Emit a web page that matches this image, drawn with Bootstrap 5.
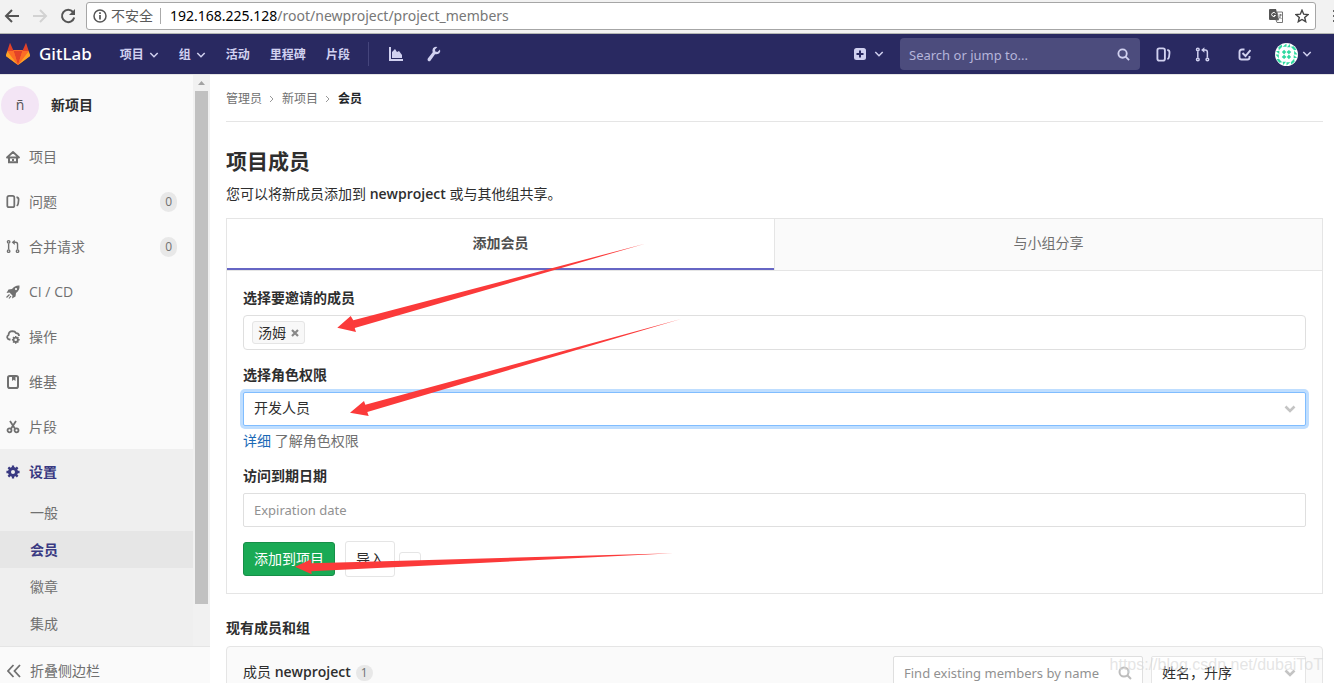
<!DOCTYPE html>
<html lang="zh-CN">
<head>
<meta charset="utf-8">
<meta name="viewport" content="width=device-width, initial-scale=1">
<title>会员 · 新项目 · GitLab</title>
<link href="https://cdn.jsdelivr.net/npm/bootstrap@5.3.0/dist/css/bootstrap.min.css" rel="stylesheet">
<style>
  body { font: 14px/20px "Open Sans", "Noto Sans CJK SC", sans-serif; color: #2e2e2e; background: #fff; }
  a { color: inherit; text-decoration: none; }
  svg { flex: none; }
  b, .fw-bold { font-weight: 600 !important; }

  /* browser bar */
  .chrome-bar { height: 34px; background: #f2f2f2; border-bottom: 1px solid #b4b6b3; color: #5a5a5a; padding: 0 0 2px 4px; }
  .chrome-bar button { border: 0; background: none; padding: 0; display: flex; color: inherit; }
  .address { height: 28px; background: #fff; border: 1px solid #a6a6a6; border-radius: 3px; padding: 0 6px; margin: 0 16px 0 10px; }
  .address .url { font-family: "Noto Sans", sans-serif; color: #777; margin-left: 9px; }
  .address .sep { width: 1px; height: 16px; background: #aaa; margin-left: 7px; }

  /* top navigation */
  .topnav { height: 40px; background: #292961; color: #d1d1f0; padding: 0 22px 0 6px; font-size: 12px; }
  .topnav .brand-word { font: 500 17px/24px "Noto Sans", sans-serif; color: #fff; margin-left: 9px; }
  .menu-links { gap: 20px; padding-top: 2px; }
  .menu-links a { display: flex; align-items: center; gap: 5px; }
  .topnav .sep { width: 1px; height: 24px; background: #45457c; margin-left: 18px; }
  .quick { width: 240px; height: 32px; background: #4c4c7d; border-radius: 4px; padding: 0 10px 0 9px; }
  .quick input { background: none; border: 0; outline: 0; color: #d1d1f0; min-width: 0; padding: 2px 0 0; font: 13px/20px "Noto Sans", sans-serif; }
  .quick input::placeholder { color: #b5b5da; }

  /* sidebar */
  .side { width: 210px; background: #fafafa; color: #707070; }
  .side-list { border-top: 1px solid #e5e5e5; }
  .side-top { height: 59px; padding-left: 1px; color: #2e2e2e; }
  .letter { width: 38px; height: 38px; background: #f3e5f5; color: #555; border-radius: 50%; }
  .side-item { height: 45px; padding: 0 16px 0 6px; gap: 9px; }
  .side-sub { height: 37px; padding-left: 30px; }
  .side-open { background: #efefef; flex: 1; }
  .side-open .current { color: #393982; font-weight: 600; }
  .side-sub.current { background: #e6e6e6; }
  .tally { background: #e8e8e8; color: #707070; border-radius: 10px; font-size: 12px; line-height: 20px; padding: 0 5px; }
  .track { width: 17px; background: #f1f1f1; padding: 0 2px; }
  .track .thumb { width: 13px; height: 513px; background: #c1c1c1; }
  .collapse-btn { height: 37px; border: 0; border-top: 1px solid #e5e5e5; background: #fafafa; color: #707070; padding: 14px 0 0 7px; gap: 9px; text-align: left; flex: none; }
  .collapse-btn svg { margin-top: 3px; }

  /* page */
  .page { border-top: 1px solid #e5e5e5; padding: 0 11px 0 16px; min-width: 0; }
  .crumbs { height: 47px; padding-top: 2px; border-bottom: 1px solid #e5e5e5; font-size: 12px; color: #707070; gap: 7px; }
  h1 { font-size: 21px; line-height: 28px; font-weight: 600; margin: 25px 0 9px; }
  .intro { margin: 0 0 14px; }
  .panel-box { border: 1px solid #e5e5e5; }
  .tabs { border-bottom: 1px solid #e5e5e5; }
  .tabs .tab { flex: 1; height: 51px; border: 0; background: #fafafa; color: #707070; padding: 0 0 4px; }
  .tabs .tab.on { background: #fff; color: #4f4f4f; font-weight: 600; border-bottom: 2px solid #6666c4; padding: 0 0 2px; }
  .tabs .tab + .tab { border-left: 1px solid #e5e5e5; }
  .invite { padding: 17px 16px 16px; }
  .invite label { font-weight: 600; display: block; margin-bottom: 7px; }
  .field { height: 34px; border: 1px solid #dfdfdf; border-radius: 2px; padding: 6px 10px; font-size: 14px; line-height: 20px; color: #2e2e2e; }
  input.field, .find input { font: 13px/20px "Noto Sans", sans-serif; }
  .field::placeholder { color: #919191; }
  .tokens { height: 35px; border-radius: 4px; padding: 0 8px; margin-bottom: 15px; }
  .tokens input { border: 0; outline: 0; min-width: 0; }
  .token { height: 23px; background: #f8f8f8; border: 1px solid #e5e5e5; border-radius: 3px; padding: 0 5px; gap: 5px; flex: none; }
  .token button { border: 0; background: none; padding: 0; display: flex; color: #888; }
  .pick { appearance: none; padding: 5px 10px 7px; background-color: #fff; background-repeat: no-repeat; background-position: right 9px center; background-size: 12px 8px;
    background-image: url("data:image/svg+xml,%3Csvg xmlns='http://www.w3.org/2000/svg' viewBox='0 0 12 8'%3E%3Cpath d='M1.5 1.5 6 6l4.500-4.500' fill='none' stroke='%23c4c4c4' stroke-width='2.600'/%3E%3C/svg%3E"); }
  .pick.focused { border-color: #80bdff; box-shadow: 0 0 0 3px #bfdeff; }
  .hint { color: #707070; margin: 5px 0 15px; }
  .hint a { color: #1b69b6; }
  .actions { height: 36px; margin-top: 14px; }
  .actions .btn { font-size: 14px; line-height: 20px; border-radius: 3px; padding: 6px 0; height: 34px; }
  .btn-add { background: #1aaa55; border-color: #168f48; color: #fff; width: 92px; }
  .actions .btn-import { border-color: #e5e5e5; color: #2e2e2e; background: #fff; height: 36px; width: 50px; padding: 7px 0; margin-left: 10px; }
  .actions .btn-blank { border-color: #e5e5e5; width: 22px; height: 14px; padding: 0; }
  .arrows { left: 0; top: 0; pointer-events: none; }
  h2 { font-size: 14px; line-height: 20px; font-weight: 600; margin: 24px 0 8px; }
  .members { background: #fafafa; border-radius: 4px 4px 0 0; height: 60px; padding: 9px 16px 0; }
  .members-title { padding-top: 6px; }
  .members .tally { line-height: 16px; padding: 0 5px; margin-left: 5px; }
  .find { width: 250px; background: #fff; }
  .find input { border: 0; outline: 0; min-width: 0; padding: 0; }
  .find input::placeholder { color: #919191; }
  .find svg { color: #bdbdbd; }
  .sort { width: 155px; border-color: #e5e5e5; font-family: "Noto Sans CJK TC", sans-serif; }
  .credit { right: 11px; bottom: 8px; font: 16px/20px "Liberation Sans", sans-serif; color: #d8d8d8aa; white-space: nowrap; }
</style>
</head>
<body class="vh-100 d-flex flex-column overflow-hidden position-relative">

<svg class="d-none">
  <defs>
    <symbol id="chev" viewBox="0 0 10 10"><path d="M1.300 3 5 6.700 8.700 3" fill="none" stroke="currentColor" stroke-width="1.500"/></symbol>
    <symbol id="issues" viewBox="0 0 16 16"><g fill="none" stroke="currentColor" stroke-width="2"><rect x="1.500" y="1.500" width="8" height="13" rx="2"/><path d="M12 3c2.500.4 2.700 1.500 2.400 3.500l-.5 4c-.2 1.500-.7 2-1.700 2.500" stroke-width="1.900"/></g></symbol>
    <symbol id="merge" viewBox="0 0 16 16"><g fill="none" stroke="currentColor" stroke-width="1.600"><path d="M3 4.500v7M8.500 3.200h2.300q2.400 0 2.400 2.300v6"/><circle cx="3" cy="2.700" r="1.400"/><circle cx="3" cy="13.300" r="1.400"/><circle cx="13.200" cy="13.300" r="1.400"/></g><path d="M10 .2v6L6.500 3.200z" fill="currentColor"/></symbol>
    <symbol id="find" viewBox="0 0 14 14"><g fill="none" stroke="currentColor" stroke-width="2"><circle cx="6" cy="6" r="4.500"/><path d="m9.300 9.300 3.700 3.700"/></g></symbol>
    <symbol id="gear" viewBox="0 0 16 16"><circle cx="8" cy="8" r="4" fill="none" stroke="currentColor" stroke-width="3.400"/><path d="M8 .5v3M8 12.500v3M.5 8h3M12.500 8h3M2.700 2.700l2 2M11.300 11.300l2 2M2.700 13.300l2-2M11.300 4.700l2-2" stroke="currentColor" stroke-width="2.600"/></symbol>
  </defs>
</svg>

<header class="chrome-bar d-flex align-items-center flex-shrink-0">
  <button type="button" aria-label="后退"><svg width="16" height="16" viewBox="0 0 16 16" fill="none" stroke="#555" stroke-width="2"><path d="M15 8H2M8 2 2 8l6 6"/></svg></button>
  <button type="button" class="ms-2 ps-1" aria-label="前进"><svg width="16" height="16" viewBox="0 0 16 16" fill="none" stroke="#d2d2d2" stroke-width="2"><path d="M1 8h13M8 2l6 6-6 6"/></svg></button>
  <button type="button" class="ms-2 ps-1" aria-label="刷新"><svg width="16" height="16" viewBox="0 0 16 16"><path d="M13 4A6.200 6.200 0 1 0 14.200 9.500" fill="none" stroke="#555" stroke-width="2"/><path d="M15 1v6H9z" fill="#555"/></svg></button>
  <div class="address d-flex align-items-center flex-grow-1">
    <svg width="14" height="14" viewBox="0 0 14 14"><circle cx="7" cy="7" r="6" fill="none" stroke="#555" stroke-width="1.500"/><path d="M7 6v4.500M7 3.300v1.600" stroke="#555" stroke-width="1.700"/></svg>
    <span class="ms-1">不安全</span><span class="sep"></span>
    <span class="url"><span class="text-black">192.168.225.128</span>/root/newproject/project_members</span>
    <button type="button" class="ms-auto" aria-label="翻译"><svg width="14" height="14" viewBox="0 0 14 14"><path d="M1 0h6l3 11H1q-1 0-1-1V1q0-1 1-1z" fill="#555"/><path d="M6.500 4.500A2 2 0 1 0 6.500 6.500H5" fill="none" stroke="#fff"/><path d="M8 3h5.500v10.500H8L7 11h2.500z" fill="#fff" stroke="#666" stroke-width=".9"/><path d="M9.500 6h3.500M11.500 5v1q-.5 3-2 4M10 7.500l2.500 2.500" stroke="#666" fill="none" stroke-width=".8"/></svg></button>
    <button type="button" class="ms-2 ps-1" aria-label="收藏"><svg width="14" height="14" viewBox="0 0 14 14"><path d="m7 1.200 1.700 4 4.300.4-3.300 2.900 1 4.200L7 10.500l-3.700 2.200 1-4.200L1 5.600l4.300-.4z" fill="none" stroke="#444" stroke-width="1.400"/></svg></button>
  </div>
  <button type="button" aria-label="菜单"><svg width="2" height="14" viewBox="0 0 2 14"><path d="M1 1h1v2H1zM1 6h1v2H1zM1 11h1v2H1z" fill="#666"/></svg></button>
</header>

<nav class="topnav d-flex align-items-center flex-shrink-0">
  <a href="#" class="d-flex align-items-center"><svg width="24" height="24" viewBox="0 0 24 24"><path d="M12 23 0 14 2 8h20l2 6z" fill="#fc6d26"/><path d="M12 23 7.600 9h8.800z" fill="#e24329"/><path d="M4 .8 1.300 9h6.300zM20 .8 22.700 9h-6.300z" fill="#e24329"/><path d="m1.300 9-1.300 4q-.2.800.5 1.400L12 23zM22.700 9l1.300 4q.2.800-.5 1.400L12 23z" fill="#fca326"/><path d="M1.300 9h6.300L12 23zM22.700 9h-6.300L12 23z" fill="#fc6d26"/></svg><span class="brand-word">GitLab</span></a>
  <div class="menu-links d-flex align-items-center fw-bold ms-4 ps-1">
    <a href="#">项目 <svg width="10" height="10"><use href="#chev"/></svg></a>
    <a href="#">组 <svg width="10" height="10"><use href="#chev"/></svg></a>
    <a href="#">活动</a>
    <a href="#">里程碑</a>
    <a href="#">片段</a>
  </div>
  <span class="sep"></span>
  <a href="#" class="ms-3 ps-1 d-flex" aria-label="统计"><svg width="14" height="14" viewBox="0 0 14 14" fill="currentColor"><path d="M0 0h2v12h12v2H0zM3 11V5l3-3 2 3 2-1 3 4v3z"/></svg></a>
  <a href="#" class="ms-4 d-flex" aria-label="管理"><svg width="14" height="16" viewBox="0 0 14 16"><path d="M13 3.500 10.500 6 8.300 5.600 8 3.500l2.400-2.600Q7.500 0 6 2.200 5 4 5.700 6.200L.8 12.500q-.8 1.500.4 2.500 1.300.9 2.400-.5L8 8.200q2.500.5 4.300-1Q13.800 5.500 13 3.500z" fill="currentColor"/></svg></a>
  <a href="#" class="ms-auto d-flex align-items-center gap-2" aria-label="新建"><svg width="12" height="12" viewBox="0 0 12 12"><rect width="12" height="12" rx="2.500" fill="currentColor"/><path d="M6 2.500v7M2.500 6h7" stroke="#292961" stroke-width="2"/></svg><svg width="10" height="10"><use href="#chev"/></svg></a>
  <div class="quick d-flex align-items-center ms-3"><input type="text" class="flex-grow-1" placeholder="Search or jump to..." aria-label="搜索"><svg width="13" height="13"><use href="#find"/></svg></div>
  <a href="#" class="ms-3 d-flex" aria-label="问题"><svg width="15" height="15"><use href="#issues"/></svg></a>
  <a href="#" class="ms-4 d-flex" aria-label="合并请求"><svg width="15" height="15"><use href="#merge"/></svg></a>
  <a href="#" class="ms-4 ps-1 d-flex" aria-label="待办"><svg width="13" height="13" viewBox="0 0 13 13" fill="none" stroke="currentColor" stroke-width="1.900"><path d="M6.500 1.500H4Q1.500 1.500 1.500 4v5.500q0 2 2 2h6q2 0 2-2V8M4.500 5l3 3L12.500 2"/></svg></a>
  <a href="#" class="ms-4 d-flex align-items-center gap-1" aria-label="用户"><svg width="23" height="23" viewBox="0 0 24 24"><circle cx="12" cy="12" r="12" fill="#fff"/><g fill="#2fd9a0"><path id="q" d="M3.500 4.500 7 1.500l.5 2.500L4 7.500zM8 4l4-3.500V4zM9.500 7l2.200 2.500L9.500 12 7.200 9.500zM1 8.500l3.500-.5v3.500z"/><use href="#q" transform="rotate(90 12 12)"/><use href="#q" transform="rotate(180 12 12)"/><use href="#q" transform="rotate(270 12 12)"/></g></svg><svg width="10" height="10"><use href="#chev"/></svg></a>
</nav>

<div class="d-flex flex-grow-1 overflow-hidden">
  <aside class="side d-flex flex-column flex-shrink-0">
    <div class="side-list d-flex flex-grow-1 overflow-hidden">
      <div class="d-flex flex-column flex-grow-1">
        <a href="#" class="side-top d-flex align-items-center fw-bold flex-shrink-0"><span class="letter d-flex align-items-center justify-content-center fw-normal me-2">ñ</span><span class="ps-1">新项目</span></a>
        <a href="#" class="side-item d-flex align-items-center flex-shrink-0"><svg width="14" height="14" viewBox="0 0 14 14"><path d="M1 7.500 7 2l6 5.500z" fill="none" stroke="currentColor" stroke-width="1.800" stroke-linejoin="round"/><path d="M3 8v4.200h8V8" fill="none" stroke="currentColor" stroke-width="2"/><path d="M6 9h2v2H6z" fill="currentColor"/></svg>项目</a>
        <a href="#" class="side-item d-flex align-items-center flex-shrink-0"><svg width="14" height="15"><use href="#issues"/></svg>问题<span class="tally ms-auto">0</span></a>
        <a href="#" class="side-item d-flex align-items-center flex-shrink-0"><svg width="14" height="15"><use href="#merge"/></svg>合并请求<span class="tally ms-auto">0</span></a>
        <a href="#" class="side-item d-flex align-items-center flex-shrink-0"><svg width="14" height="14" viewBox="0 0 14 14"><path d="M13.500.5Q9 0 6 4L2.500 4.500.5 8l3-.5 3 3L6 13.500l3.500-2L10 8q4-3 3.500-7.500zM10 3a1.100 1.100 0 1 1 0 2.200A1.100 1.100 0 0 1 10 3z" fill="currentColor" fill-rule="evenodd"/><path d="m3.500 9.500-3 3M5 11l-2 2.500" stroke="currentColor" stroke-width="1.200"/></svg>CI / CD</a>
        <a href="#" class="side-item d-flex align-items-center flex-shrink-0"><svg width="14" height="14" viewBox="0 0 14 14"><path d="M4.500 9.500H3.300A2.400 2.400 0 0 1 2.500 5Q2.700 1.300 6.500 1.200 9 1.200 10.200 3.200 13 3.400 13 6" fill="none" stroke="currentColor" stroke-width="1.800"/><circle cx="9.700" cy="9.800" r="2.200" fill="none" stroke="currentColor" stroke-width="1.800"/><path d="M9.700 5.900v1.500M9.700 12.200v1.600M5.900 9.800h1.500M12 9.800h1.700M7 7.100l1 1M11.400 11.500l1 1M7 12.500l1-1M11.400 8.100l1-1" stroke="currentColor" stroke-width="1.400"/></svg>操作</a>
        <a href="#" class="side-item d-flex align-items-center flex-shrink-0"><svg width="14" height="14" viewBox="0 0 14 14"><rect x="2" y="1" width="10" height="12" rx="1.800" fill="none" stroke="currentColor" stroke-width="2"/><path d="M6 1h3.500v5L7.700 4.800 6 6z" fill="currentColor"/></svg>维基</a>
        <a href="#" class="side-item d-flex align-items-center flex-shrink-0"><svg width="14" height="14" viewBox="0 0 14 14" fill="none" stroke="currentColor" stroke-width="1.800"><circle cx="3.500" cy="10.300" r="2"/><circle cx="10.500" cy="10.300" r="2"/><path d="m4 1 5.200 8M10 1 4.800 9"/></svg>片段</a>
        <div class="side-open">
          <a href="#" class="side-item current d-flex align-items-center"><svg width="14" height="14"><use href="#gear"/></svg>设置</a>
          <a href="#" class="side-sub d-flex align-items-center">一般</a>
          <a href="#" class="side-sub current d-flex align-items-center">会员</a>
          <a href="#" class="side-sub d-flex align-items-center">徽章</a>
          <a href="#" class="side-sub d-flex align-items-center">集成</a>
        </div>
      </div>
      <div class="track d-flex flex-column align-items-center flex-shrink-0"><svg width="13" height="16" viewBox="0 0 13 16"><path d="m3 10 3.500-4L10 10z" fill="#a3a3a3"/></svg><div class="thumb"></div></div>
    </div>
    <button type="button" class="collapse-btn d-flex"><svg width="14" height="14" viewBox="0 0 14 14" fill="none" stroke="currentColor" stroke-width="1.800"><path d="M6.500 1 1 7l5.500 6M13 1 7.500 7l5.500 6"/></svg>折叠侧边栏</button>
  </aside>

  <main class="page flex-grow-1">
    <div class="crumbs d-flex align-items-center">
      <a href="#">管理员</a><svg width="6" height="8" viewBox="0 0 6 8"><path d="m1 1 3 3-3 3" fill="none" stroke="#999"/></svg>
      <a href="#">新项目</a><svg width="6" height="8" viewBox="0 0 6 8"><path d="m1 1 3 3-3 3" fill="none" stroke="#999"/></svg>
      <a href="#" class="fw-bold text-dark">会员</a>
    </div>
    <h1>项目成员</h1>
    <p class="intro">您可以将新成员添加到 <b>newproject</b> 或与其他组共享。</p>

    <section class="panel-box position-relative">
      <div class="tabs d-flex"><button type="button" class="tab on">添加会员</button><button type="button" class="tab">与小组分享</button></div>
      <form class="invite">
        <label for="who">选择要邀请的成员</label>
        <div class="field tokens d-flex align-items-center"><span class="token d-flex align-items-center">汤姆<button type="button" aria-label="移除"><svg width="8" height="8" viewBox="0 0 8 8"><path d="m1 1 6 6M7 1 1 7" stroke="currentColor" stroke-width="2.200"/></svg></button></span><input id="who" type="text" class="flex-grow-1"></div>
        <label for="role">选择角色权限</label>
        <select id="role" class="field pick focused w-100 d-block"><option>开发人员</option></select>
        <p class="hint"><a href="#">详细</a> 了解角色权限</p>
        <label for="until">访问到期日期</label>
        <input id="until" type="text" class="field w-100 d-block" placeholder="Expiration date">
        <div class="actions d-flex align-items-center"><button type="button" class="btn btn-add">添加到项目</button><button type="button" class="btn btn-import">导入</button><button type="button" class="btn btn-blank ms-1" aria-label="选项"></button></div>
      </form>
      <svg class="arrows position-absolute" width="460" height="375" viewBox="227 219 460 375" fill="#fb3a3a"><path d="M337.300 327.700 350.700 316 353.300 320.300 645 243.700 354.700 328 356 332z"/><path d="M350 412.700 364 401 365.300 404.700 681 319 367.300 412 368.700 416z"/><path d="M295 566.700 311.300 559.300V563.300L673 553.300 311.300 571.300 311.700 574.300z"/></svg>
    </section>

    <h2>现有成员和组</h2>
    <section class="panel-box members d-flex align-items-start">
      <div class="members-title">成员 <b>newproject</b><span class="tally d-inline-block">1</span></div>
      <div class="find field d-flex align-items-center ms-auto"><input type="text" class="flex-grow-1" placeholder="Find existing members by name" aria-label="查找成员"><svg width="14" height="14"><use href="#find"/></svg></div>
      <select class="field pick sort ms-2" aria-label="排序"><option>姓名，升序</option></select>
    </section>
  </main>
</div>
<div class="credit position-absolute">https://blog.csdn.net/dubaiToT</div>
<script src="https://cdn.jsdelivr.net/npm/bootstrap@5.3.0/dist/js/bootstrap.bundle.min.js"></script>
</body>
</html>
